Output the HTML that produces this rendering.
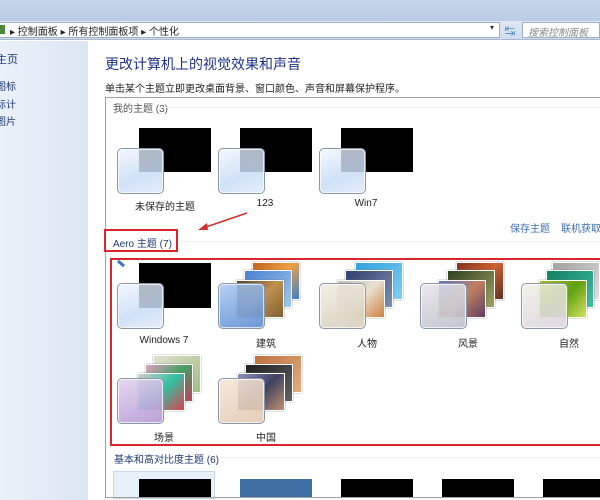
<!DOCTYPE html>
<html><head><meta charset="utf-8"><style>
*{margin:0;padding:0;box-sizing:border-box}
html,body{width:600px;height:500px;overflow:hidden}
body{position:relative;background:#fff;font-family:"Liberation Sans","Noto Sans CJK SC",sans-serif;color:#333}
#w{position:absolute;left:0;top:0;width:600px;height:500px;overflow:hidden}
.a{position:absolute}
.t{position:absolute;font-size:10px;white-space:nowrap}
.blk{position:absolute;background:#000}
.gl{position:absolute;width:47px;height:46px;border:1px solid #8a97a8;border-radius:5px;background:linear-gradient(160deg,rgba(240,246,255,.75),rgba(200,220,245,.85) 60%,rgba(225,236,250,.9));box-shadow:inset 0 0 0 1px rgba(255,255,255,.7)}
.ph{position:absolute;width:48px;height:38px;border:1px solid #fff;box-shadow:0 0 1px #666}
.lbl{position:absolute;font-size:10px;width:100px;text-align:center;color:#222}
</style></head><body><div id="w">
<div class="a" style="left:0;top:0;width:600px;height:21px;background:linear-gradient(#c5d6ea,#b8cce4)"></div>
<div class="a" style="left:0;top:21px;width:600px;height:19px;background:linear-gradient(#dfe9f5,#cfdced);border-bottom:1px solid #a9bad0"></div>
<div class="a" style="left:0;top:22px;width:500px;height:16px;background:#fff;border:1px solid #9fb0c6;border-left:none"></div>
<div class="a" style="left:0;top:25px;width:5px;height:9px;background:#4a8a3a"></div>
<div class="t" style="left:10px;top:23px;font-size:10px;color:#222">▸ 控制面板 ▸ 所有控制面板项 ▸ 个性化</div>
<div class="t" style="left:490px;top:23px;font-size:8px">▾</div>
<div class="t" style="left:505px;top:23px;color:#3a7ac0">↹</div>
<div class="a" style="left:522px;top:22px;width:78px;height:16px;background:#fff;border:1px solid #9fb0c6"></div>
<div class="t" style="left:528px;top:24px;color:#888;font-style:italic">搜索控制面板</div>
<div class="a" style="left:0;top:41px;width:88px;height:459px;background:linear-gradient(90deg,#e9f0f9,#dbe6f3)"></div>
<div class="t" style="left:-4px;top:51px;color:#1e3a78;font-size:11px">主页</div>
<div class="t" style="left:-4px;top:78px;color:#1e3a78">图标</div>
<div class="t" style="left:-4px;top:96px;color:#1e3a78">标计</div>
<div class="t" style="left:-4px;top:113px;color:#1e3a78">图片</div>
<div class="t" style="left:105px;top:54px;font-size:14px;color:#1e3287">更改计算机上的视觉效果和声音</div>
<div class="t" style="left:105px;top:80px;font-size:10px;color:#222">单击某个主题立即更改桌面背景、窗口颜色、声音和屏幕保护程序。</div>
<div class="a" style="left:105px;top:97px;width:495px;height:401px;border:1px solid #a0a0a0;border-right:none"></div>
<div class="t" style="left:113px;top:100px;color:#555">我的主题 (3)</div>
<div class="a" style="left:160px;top:107px;width:440px;height:1px;background:#eee"></div>
<div class="blk" style="left:139px;top:128px;width:72px;height:44px"></div>
<div class="gl" style="left:117px;top:148px"></div>
<div class="lbl" style="left:115px;top:198px">未保存的主题</div>
<div class="blk" style="left:240px;top:128px;width:72px;height:44px"></div>
<div class="gl" style="left:218px;top:148px"></div>
<div class="lbl" style="left:215px;top:198px">123</div>
<div class="blk" style="left:341px;top:128px;width:72px;height:44px"></div>
<div class="gl" style="left:319px;top:148px"></div>
<div class="lbl" style="left:316px;top:198px">Win7</div>
<div class="t" style="left:510px;top:220px;color:#3a6fb0">保存主题</div>
<div class="t" style="left:561px;top:220px;color:#3a6fb0">联机获取更</div>
<svg class="a" style="left:195px;top:210px" width="55" height="25"><line x1="52" y1="3" x2="8" y2="18" stroke="#d03030" stroke-width="1.5"/><polygon points="3,20 12,13 13,20" fill="#d03030"/></svg>
<div class="a" style="left:104px;top:229px;width:74px;height:23px;border:2px solid #d8262e"></div>
<div class="t" style="left:113px;top:235px;color:#1e3a78">Aero 主题 (7)</div>
<div class="a" style="left:180px;top:241px;width:420px;height:1px;background:#eee"></div>
<div class="a" style="left:110px;top:258px;width:490px;height:188px;border:2px solid #d8262e;border-right:none"></div>
<div class="a" style="left:117px;top:262px;width:8px;height:3px;background:#3a7ac0;transform:rotate(40deg)"></div>
<div class="blk" style="left:139px;top:263px;width:72px;height:45px"></div>
<div class="gl" style="left:117px;top:283px"></div>
<div class="lbl" style="left:114px;top:335px">Windows 7</div>
<div class="ph" style="left:252px;top:262px;background:linear-gradient(135deg,#c06020,#f0a040,#3a80d0)"></div>
<div class="ph" style="left:244px;top:270px;background:linear-gradient(135deg,#4a80d0,#a0c8f0)"></div>
<div class="ph" style="left:236px;top:280px;background:linear-gradient(135deg,#5a4020,#c09050,#806030)"></div>
<div class="gl" style="left:218px;top:283px;background:linear-gradient(160deg,rgba(170,200,240,.85),rgba(90,140,210,.9))"></div>
<div class="lbl" style="left:216px;top:335px">建筑</div>
<div class="ph" style="left:355px;top:262px;background:linear-gradient(135deg,#30a0e0,#80d0f0)"></div>
<div class="ph" style="left:345px;top:270px;background:linear-gradient(135deg,#304070,#8090b0)"></div>
<div class="ph" style="left:337px;top:280px;background:linear-gradient(135deg,#c0c0b0,#e8e0d0,#d08040)"></div>
<div class="gl" style="left:319px;top:283px;background:linear-gradient(160deg,rgba(240,236,225,.85),rgba(215,205,185,.9))"></div>
<div class="lbl" style="left:317px;top:335px">人物</div>
<div class="ph" style="left:456px;top:262px;background:linear-gradient(135deg,#803020,#d06030,#603020)"></div>
<div class="ph" style="left:447px;top:270px;background:linear-gradient(135deg,#304020,#a0a060)"></div>
<div class="ph" style="left:438px;top:280px;background:linear-gradient(135deg,#6070c0,#c08060,#604060)"></div>
<div class="gl" style="left:420px;top:283px;background:linear-gradient(160deg,rgba(230,230,235,.85),rgba(190,190,200,.9))"></div>
<div class="lbl" style="left:418px;top:335px">风景</div>
<div class="ph" style="left:552px;top:262px;background:linear-gradient(135deg,#a0a0a0,#e0e0e0)"></div>
<div class="ph" style="left:546px;top:270px;background:linear-gradient(135deg,#108060,#40c0a0)"></div>
<div class="ph" style="left:539px;top:280px;background:linear-gradient(135deg,#a0c020,#60a010,#d0e060)"></div>
<div class="gl" style="left:521px;top:283px;background:linear-gradient(160deg,rgba(240,240,225,.8),rgba(220,210,225,.9))"></div>
<div class="lbl" style="left:519px;top:335px">自然</div>
<div class="ph" style="left:153px;top:355px;background:linear-gradient(135deg,#e0e0d0,#a0c080)"></div>
<div class="ph" style="left:145px;top:364px;background:linear-gradient(135deg,#e0a0c0,#40a060,#c04060)"></div>
<div class="ph" style="left:137px;top:373px;background:linear-gradient(135deg,#d0d0d0,#30c0a0,#e04050)"></div>
<div class="gl" style="left:117px;top:378px;background:linear-gradient(160deg,rgba(225,210,240,.85),rgba(180,150,210,.9))"></div>
<div class="lbl" style="left:114px;top:429px">场景</div>
<div class="ph" style="left:254px;top:355px;background:linear-gradient(135deg,#c07040,#e0b080)"></div>
<div class="ph" style="left:245px;top:364px;background:linear-gradient(135deg,#202020,#606060)"></div>
<div class="ph" style="left:237px;top:373px;background:linear-gradient(135deg,#9090c0,#404060,#c09070)"></div>
<div class="gl" style="left:218px;top:378px;background:linear-gradient(160deg,rgba(245,230,215,.85),rgba(225,200,175,.9))"></div>
<div class="lbl" style="left:216px;top:429px">中国</div>
<div class="t" style="left:114px;top:451px;color:#1e3a78">基本和高对比度主题 (6)</div>
<div class="a" style="left:220px;top:457px;width:380px;height:1px;background:#eee"></div>
<div class="a" style="left:113px;top:471px;width:102px;height:28px;background:#e8f0fa;border:1px solid #c8d8ec"></div>
<div class="blk" style="left:139px;top:479px;width:72px;height:19px"></div>
<div class="a" style="left:240px;top:479px;width:72px;height:19px;background:#3f6fa5"></div>
<div class="blk" style="left:341px;top:479px;width:72px;height:19px"></div>
<div class="blk" style="left:442px;top:479px;width:72px;height:19px"></div>
<div class="blk" style="left:543px;top:479px;width:57px;height:19px"></div>
<div class="a" style="left:105px;top:497px;width:495px;height:1px;background:#a0a0a0"></div>
</div></body></html>
